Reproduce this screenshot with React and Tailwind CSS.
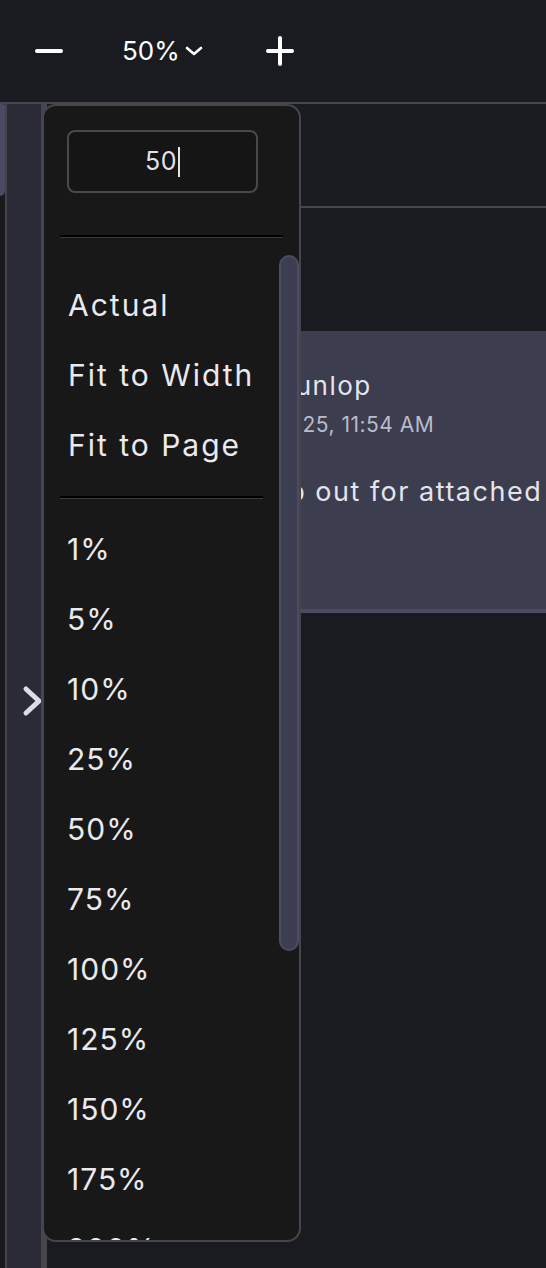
import React from "react";

const zoomLevels = ["1%", "5%", "10%", "25%", "50%", "75%", "100%", "125%", "150%", "175%", "200%"];

function Minus() {
  return (
    <svg width="32" height="32" viewBox="0 0 32 32" fill="none">
      <line x1="4" y1="16" x2="28" y2="16" stroke="#ffffff" strokeWidth="4" strokeLinecap="round" />
    </svg>
  );
}

function Plus() {
  return (
    <svg width="32" height="32" viewBox="0 0 32 32" fill="none">
      <line x1="4" y1="16" x2="28" y2="16" stroke="#ffffff" strokeWidth="4" strokeLinecap="round" />
      <line x1="16" y1="3" x2="16" y2="29" stroke="#ffffff" strokeWidth="4" strokeLinecap="round" />
    </svg>
  );
}

export default function App() {
  return (
    <div className="relative w-[546px] h-[1268px] overflow-hidden bg-[#1a1b20] font-['Inter',sans-serif] text-[#e9e9ee]">
      {/* Toolbar */}
      <header className="h-[104px] flex items-center border-b-2 border-[#46474c] bg-[#1a1b20]">
        <button className="ml-[33px] w-[32px] h-[32px] flex items-center justify-center">
          <Minus />
        </button>
        <button className="ml-[57px] flex items-center gap-[5px] text-white">
          <span className="text-[26px] leading-none">50%</span>
          <svg width="18" height="12" viewBox="0 0 18 12" fill="none">
            <polyline points="2,3 9,9 16,3" stroke="#ffffff" strokeWidth="2.6" strokeLinecap="round" strokeLinejoin="round" />
          </svg>
        </button>
        <button className="ml-[61px] w-[32px] h-[32px] flex items-center justify-center">
          <Plus />
        </button>
      </header>

      {/* Body */}
      <div className="flex h-[1164px]">
        <div className="w-[6px] bg-[#1a1a1c]">
          <div className="h-[92px] w-[5px] rounded-br-[5px] rounded-tr-[2px] bg-[#4a4a62]" />
        </div>
        <div className="w-[36px] bg-[#2b2b38] border-l-2 border-[#44454b] flex items-center pl-[14px] overflow-visible">
          <div className="mt-[30px] shrink-0">
            <svg width="22" height="34" viewBox="0 0 22 34" fill="none">
              <polyline points="5,5 18,17 5,29" stroke="#dcdce6" strokeWidth="5" strokeLinecap="round" strokeLinejoin="round" />
            </svg>
          </div>
        </div>
        <div className="w-[10px] bg-[#18181a]" />
        <div className="flex-1 border-l-[6px] border-[#46464c] bg-[#1a1b21] flex flex-col">
          <div className="h-[104px] border-b-2 border-[#47484d] bg-[#1a1b20]" />
          <div className="mt-[123px] h-[282px] bg-[#3c3d4e] border-b-4 border-[#4b4c60] flex flex-col pl-[24px] pt-[37px] whitespace-nowrap">
            <div className="flex">
              <div className="w-[48px] h-[48px] rounded-full bg-[#5a5b70] shrink-0 mt-[4px]" />
              <div className="ml-[30px] flex flex-col">
                <span className="text-[26px] tracking-[1.5px] leading-[36px] text-[#e4e4ec]">Rebecca Dunlop</span>
                <span className="text-[21px] tracking-[0.5px] leading-[30px] mt-[6px] text-[#babbc8]">January 27, 2025, 11:54 AM</span>
              </div>
            </div>
            <p className="text-[27px] tracking-[1.5px] leading-[36px] mt-[34px] text-[#e4e4ec]">Hey, please help out for attached files</p>
          </div>
        </div>
      </div>

      {/* Zoom popup menu */}
      <div className="absolute left-[42px] top-[104px] w-[259px] h-[1138px] rounded-[14px] border-2 border-[#45464b] bg-[#181818] overflow-hidden flex flex-col">
        <div className="pt-[24px] pl-[23px]">
          <div className="w-[191px] h-[63px] rounded-[8px] border-2 border-[#48484d] bg-[#151515] flex items-center justify-center">
            <span className="text-[25px] tracking-[0.5px] text-[#e2e2ea] leading-none">50</span>
            <span className="ml-[1px] w-[2px] h-[30px] bg-[#e2e2ea]" />
          </div>
        </div>
        <div className="mt-[42px] mx-[16px] border-t-2 border-b border-t-black border-b-[#3a3a3f]" />
        <div className="relative flex-1 overflow-hidden">
          <div className="pt-[32px] pr-[20px]">
            {["Actual", "Fit to Width", "Fit to Page"].map((t) => (
              <div key={t} className="h-[70px] flex items-center pl-[24px] text-[30px] tracking-[2px]">
                {t}
              </div>
            ))}
            <div className="mt-[16px] mb-[15px] ml-[16px] mr-[16px] border-t-2 border-b border-t-black border-b-[#3a3a3f]" />
            {zoomLevels.map((z) => (
              <div key={z} className="h-[70px] flex items-center pl-[23px] text-[30px] tracking-[1px]">
                {z}
              </div>
            ))}
          </div>
          <div className="absolute right-0 top-[17px] w-[20px] h-[696px] rounded-full bg-[#3e3e52] border-2 border-[#4b4c62]" />
        </div>
      </div>
    </div>
  );
}
